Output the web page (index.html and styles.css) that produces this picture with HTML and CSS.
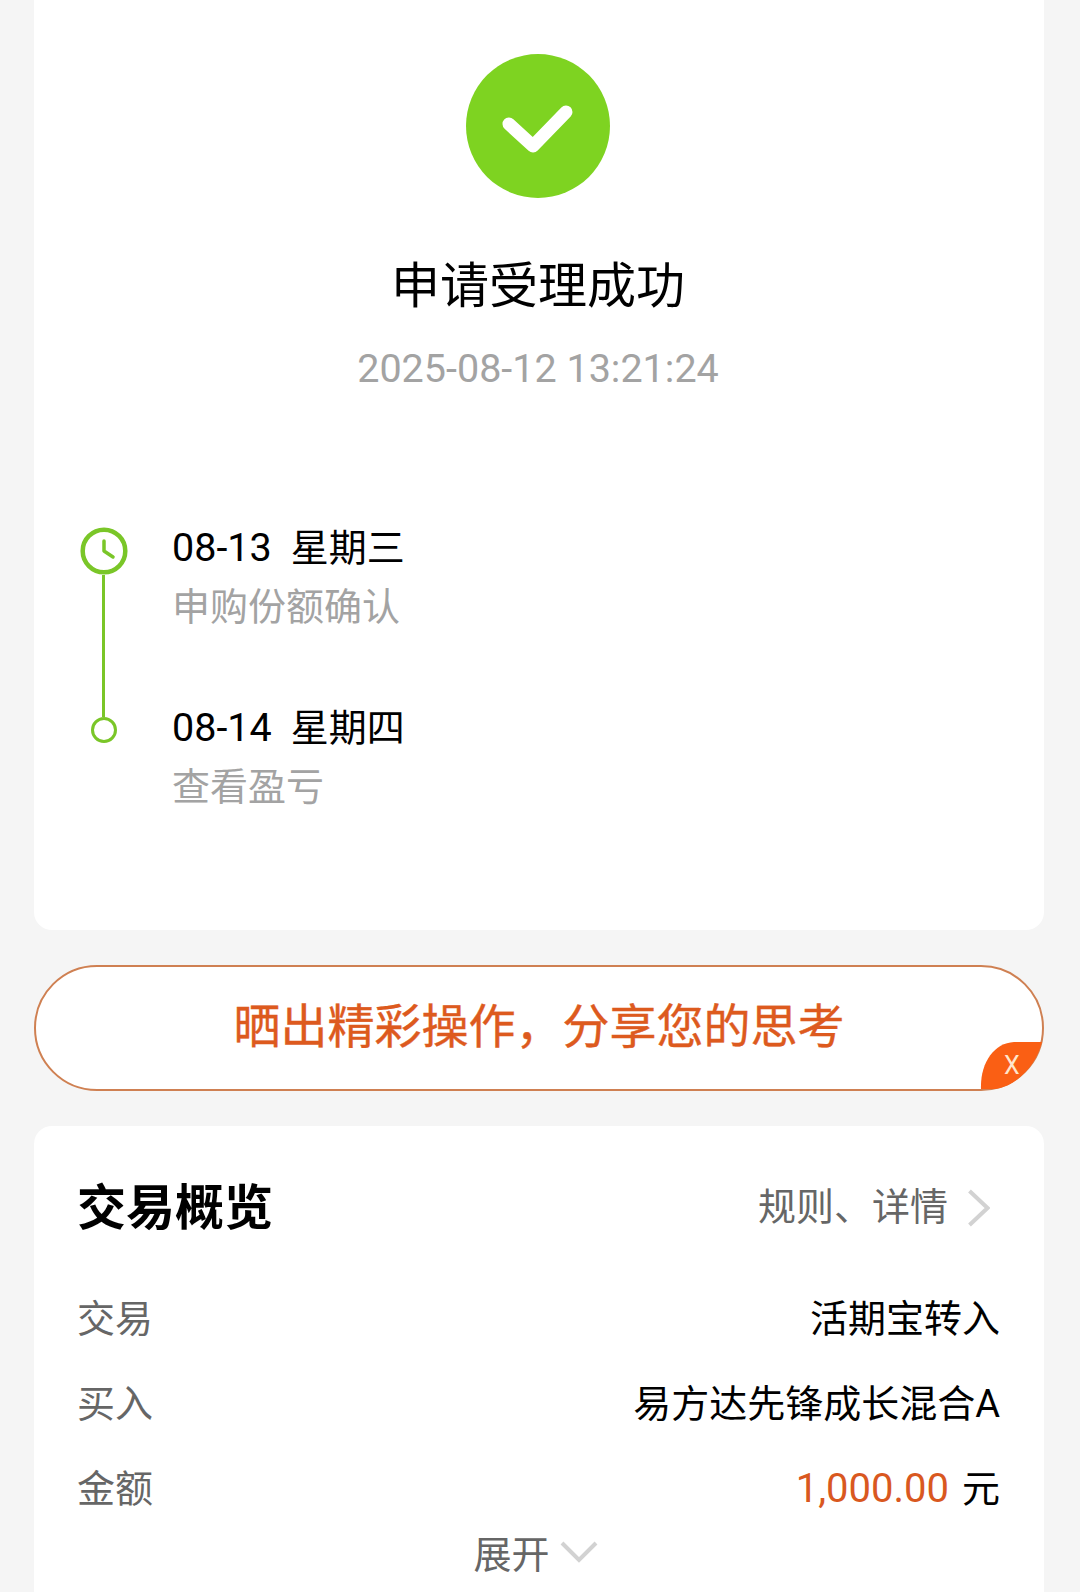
FILE: index.html
```html
<!DOCTYPE html>
<html lang="zh-CN">
<head>
    <meta charset="UTF-8">
    <meta name="viewport" content="width=device-width, initial-scale=1.0">
    <title>申请受理成功</title>
    <link rel="stylesheet" href="styles.css">
</head>
<body>
    <div class="page">
        <!-- Result card -->
        <div class="card result-card">
            <svg class="success-icon" width="144" height="144" viewBox="0 0 144 144">
                <circle cx="72" cy="72" r="72" fill="#7ed321"/>
                <path d="M43 70 L67 92 L100 58" fill="none" stroke="#fff" stroke-width="13" stroke-linecap="round" stroke-linejoin="round"/>
            </svg>
            <div class="result-title">申请受理成功</div>
            <div class="result-time">2025-08-12 13:21:24</div>

            <div class="steps">
                <div class="step step-first">
                    <div class="step-mark">
                        <svg width="48" height="48" viewBox="0 0 48 48">
                            <circle cx="24" cy="24" r="21.3" fill="#fff" stroke="#7ac628" stroke-width="4.5"/>
                            <path d="M24 14 V24 L33 30" fill="none" stroke="#7ac628" stroke-width="3.5" stroke-linecap="round" stroke-linejoin="round"/>
                        </svg>
                        <div class="step-line"></div>
                    </div>
                    <div class="step-text">
                        <div class="step-date"><span class="step-day">08-13</span><span>星期三</span></div>
                        <div class="step-desc">申购份额确认</div>
                    </div>
                </div>
                <div class="step">
                    <div class="step-mark">
                        <div class="step-line step-line-short"></div>
                        <div class="step-dot"></div>
                    </div>
                    <div class="step-text">
                        <div class="step-date"><span class="step-day">08-14</span><span>星期四</span></div>
                        <div class="step-desc">查看盈亏</div>
                    </div>
                </div>
            </div>
        </div>

        <!-- Share banner -->
        <div class="share-banner">
            <span>晒出精彩操作，分享您的思考</span>
            <svg class="share-close" width="64" height="50" viewBox="0 0 64 50">
                <path d="M1 48 C0 22 14 2 34 1 L62 1 C56 24 38 44 16 48 Z" fill="#fa5f14"/>
                <text x="24" y="33" class="share-close-x">X</text>
            </svg>
        </div>

        <!-- Trade overview -->
        <div class="card trade-card">
            <div class="trade-head">
                <div class="trade-title">交易概览</div>
                <div class="trade-link">
                    <span>规则、详情</span>
                    <svg class="trade-chevron" width="22" height="38" viewBox="0 0 22 38">
                        <path d="M1.5 2 L19.5 19 L1.5 36" fill="none" stroke="#d2d2d2" stroke-width="4"/>
                    </svg>
                </div>
            </div>
            <div class="trade-row">
                <span class="trade-label">交易</span>
                <span>活期宝转入</span>
            </div>
            <div class="trade-row">
                <span class="trade-label">买入</span>
                <span>易方达先锋成长混合A</span>
            </div>
            <div class="trade-row">
                <span class="trade-label">金额</span>
                <span class="trade-value"><span class="trade-amount">1,000.00</span><span>元</span></span>
            </div>
            <div class="trade-more">
                <span>展开</span>
                <svg width="38" height="24" viewBox="0 0 38 24">
                    <path d="M2 3 L19 20 L36 3" fill="none" stroke="#d2d2d2" stroke-width="4"/>
                </svg>
            </div>
        </div>
    </div>
</body>
</html>
```

FILE: styles.css
```css
* {
    margin: 0;
    padding: 0;
    box-sizing: border-box;
}

body {
    font-family: Roboto, 'Noto Sans CJK SC', sans-serif;
    height: 1592px;
    overflow: hidden;
    background: #f5f5f5;
    color: #000;
}

.page {
    display: flex;
    flex-direction: column;
    gap: 35px;
    padding: 0 36px 0 34px;
}

.card {
    background: #fff;
    border-radius: 18px;
}

.result-card {
    height: 930px;
    border-radius: 0 0 18px 18px;
    display: flex;
    flex-direction: column;
    align-items: center;
    padding: 54px 2px 0 0;
}

.success-icon {
    display: block;
}

.result-title {
    margin-top: 56px;
    font-size: 49px;
    line-height: 66px;
}

.result-time {
    margin-top: 24px;
    font-size: 39.5px;
    line-height: 50px;
    color: #a3a3a3;
}

.steps {
    align-self: stretch;
    margin-top: 132px;
    padding-left: 45.5px;
}

.step {
    display: flex;
    gap: 44.5px;
}

.step-first {
    height: 180px;
}

.step-mark {
    width: 48px;
    display: flex;
    flex-direction: column;
    align-items: center;
    flex-shrink: 0;
}

.step-first .step-mark {
    padding-top: 1px;
}

.step-mark svg {
    display: block;
    flex-shrink: 0;
}

.step-line {
    width: 2.5px;
    flex: 1;
    background: #7ac628;
}

.step-line-short {
    flex: none;
    height: 11px;
}

.step-dot {
    width: 26px;
    height: 26px;
    border: 3px solid #7ac628;
    border-radius: 50%;
    background: #fff;
}

.step-date {
    display: flex;
    align-items: baseline;
    gap: 19px;
    font-size: 38px;
    line-height: 44px;
}

.step-day {
    font-size: 39.5px;
}

.step-desc {
    margin-top: 15px;
    font-size: 38px;
    line-height: 44px;
    color: #a3a3a3;
}

.share-banner {
    position: relative;
    height: 126px;
    padding-bottom: 12px;
    background: #fff;
    border: 2px solid #cf8052;
    border-radius: 63px;
    display: flex;
    align-items: center;
    justify-content: center;
    font-size: 47px;
    color: #dd5a1e;
    -webkit-text-stroke: 0.4px #dd5a1e;
}

.share-close {
    position: absolute;
    right: -2px;
    bottom: -2px;
}

.share-close-x {
    font-size: 25px;
    font-weight: 400;
    fill: #ffe6cc;
    stroke: none;
    -webkit-text-stroke: 0;
}

.trade-card {
    height: 500px;
    padding: 40px 44px 0 43px;
    font-size: 38px;
}

.trade-head {
    display: flex;
    align-items: center;
    justify-content: space-between;
    height: 74px;
    margin-bottom: 33px;
}

.trade-title {
    font-size: 49px;
    font-weight: 700;
}

.trade-link {
    display: flex;
    align-items: center;
    gap: 20px;
    margin-right: 10px;
    color: #666;
}

.trade-chevron {
    margin-top: 10px;
}

.trade-row {
    display: flex;
    justify-content: space-between;
    align-items: center;
    height: 85px;
}

.trade-label {
    color: #666;
}

.trade-value {
    display: flex;
    align-items: baseline;
    gap: 13px;
}

.trade-amount {
    font-size: 40px;
    color: #d9581f;
}

.trade-more {
    display: flex;
    align-items: center;
    justify-content: center;
    gap: 10px;
    height: 47px;
    padding-right: 6px;
    color: #666;
}
```
